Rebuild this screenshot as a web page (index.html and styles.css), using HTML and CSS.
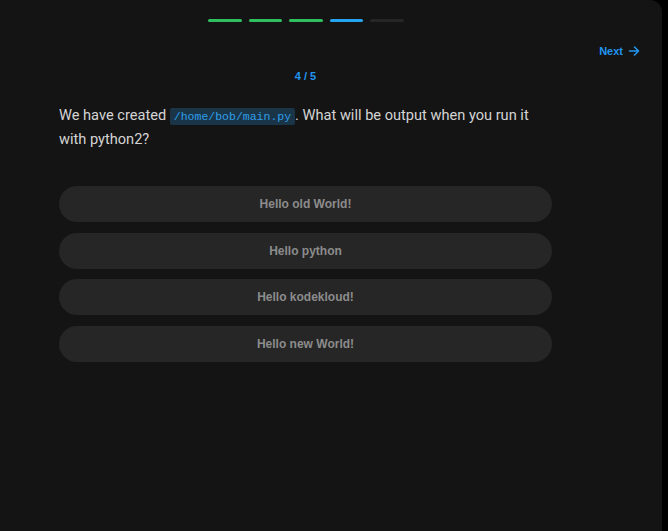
FILE: index.html
```html
<!DOCTYPE html>
<html>
<head>
<meta charset="utf-8">
<link rel="stylesheet" href="styles.css">
</head>
<body>
<div class="panel">
  <div class="progress">
    <span class="seg done"></span>
    <span class="seg done"></span>
    <span class="seg done"></span>
    <span class="seg current"></span>
    <span class="seg"></span>
  </div>
  <div class="topbar">
    <a class="next">Next
      <svg width="12" height="12" viewBox="0 0 12 12" fill="none" stroke="currentColor" stroke-width="1.6" stroke-linecap="round" stroke-linejoin="round"><path d="M1.5 6h9M6.5 2l4 4-4 4"/></svg>
    </a>
  </div>
  <div class="content">
    <div class="counter">4 / 5</div>
    <p class="question">We have created <code>/home/bob/main.py</code>. What will be output when you run it with python2?</p>
    <div class="answers">
      <button class="answer">Hello old World!</button>
      <button class="answer">Hello python</button>
      <button class="answer">Hello kodekloud!</button>
      <button class="answer">Hello new World!</button>
    </div>
  </div>
</div>
</body>
</html>
```
FILE: styles.css
```css
html, body {
  margin: 0;
  padding: 0;
  background: #000;
  height: 100%;
}
body {
  font-family: Roboto, "Liberation Sans", sans-serif;
}
.panel {
  width: 662px;
  height: 531px;
  background: #141414;
  border-top-right-radius: 12px;
  box-sizing: border-box;
  padding-top: 19px;
}
.progress {
  display: flex;
  gap: 7px;
  padding-left: 208px;
}
.seg {
  width: 33.5px;
  height: 3px;
  border-radius: 2px;
  background: #262626;
}
.seg.done { background: #2fbf61; }
.seg.current { background: #25a4f0; }
.topbar {
  display: flex;
  justify-content: flex-end;
  padding-right: 22px;
  margin-top: 23px;
}
.next {
  display: flex;
  align-items: center;
  gap: 5px;
  color: #2196f3;
  font-size: 11px;
  font-weight: 700;
  font-family: "Liberation Sans", Arial, sans-serif;
}
.content {
  width: 493px;
  margin-left: 59px;
}
.counter {
  text-align: center;
  color: #2196f3;
  font-size: 11px;
  font-weight: 700;
  font-family: "Liberation Sans", Arial, sans-serif;
  margin-top: 13px;
}
.question {
  margin: 22px 0 0;
  color: #d4d4d4;
  font-size: 14.6px;
  line-height: 22px;
}
.question code {
  font-family: "Liberation Mono", monospace;
  font-size: 11.5px;
  color: #2f9ee8;
  background: #1a3548;
  padding: 2px 4px;
  border-radius: 2px;
}
.answers {
  display: flex;
  flex-direction: column;
  gap: 10.7px;
  margin-top: 36px;
}
.answer {
  height: 36px;
  border: none;
  border-radius: 18px;
  background: #262626;
  color: #8c8c8c;
  font-family: "Liberation Sans", Arial, sans-serif;
  font-size: 12px;
  font-weight: 700;
  padding: 0;
}
```
